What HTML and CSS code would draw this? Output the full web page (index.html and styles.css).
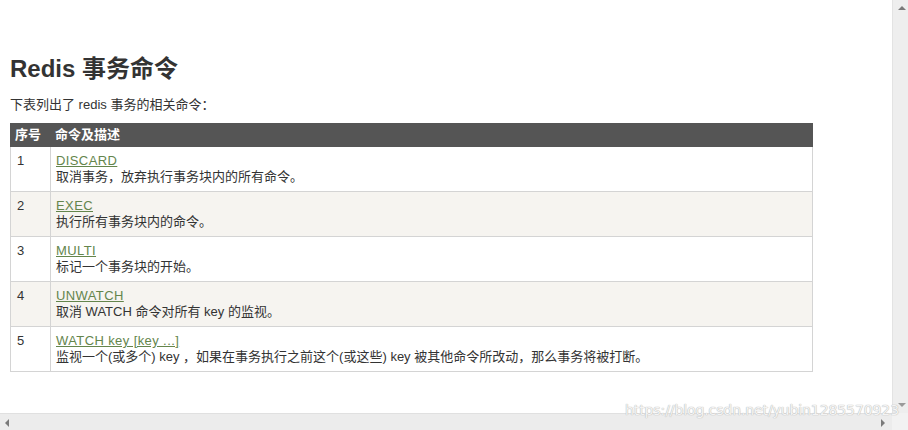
FILE: index.html
```html
<!DOCTYPE html>
<html lang="zh-CN">
<head>
<meta charset="utf-8">
<title>Redis 事务命令</title>
<link rel="stylesheet" href="styles.css">
</head>
<body>
<div class="frame">
  <div class="viewport">
    <div class="article">
      <h2 class="title">Redis 事务命令</h2>
      <p class="intro">下表列出了 redis 事务的相关命令：</p>
      <table class="reference">
        <thead>
          <tr><th class="col-no">序号</th><th>命令及描述</th></tr>
        </thead>
        <tbody>
          <tr><td>1</td><td><a href="#">DISCARD</a><br>取消事务，放弃执行事务块内的所有命令。</td></tr>
          <tr class="alt"><td>2</td><td><a href="#">EXEC</a><br>执行所有事务块内的命令。</td></tr>
          <tr><td>3</td><td><a href="#">MULTI</a><br>标记一个事务块的开始。</td></tr>
          <tr class="alt"><td>4</td><td><a href="#">UNWATCH</a><br>取消 WATCH 命令对所有 key 的监视。</td></tr>
          <tr><td>5</td><td><a href="#">WATCH key [key ...]</a><br>监视一个(或多个) key ，如果在事务执行之前这个(或这些) key 被其他命令所改动，那么事务将被打断。</td></tr>
        </tbody>
      </table>
    </div>
  </div>
  <div class="vscroll"><span class="arrow up"></span><span class="arrow down"></span></div>
  <div class="hscroll"><span class="arrow left"></span><span class="arrow right"></span></div>
  <div class="corner"></div>
  <div class="watermark">https://blog.csdn.net/yubin1285570923</div>
</div>
</body>
</html>
```
FILE: styles.css
```css
html, body {
  margin: 0;
  padding: 0;
  background: #fff;
}
.frame {
  position: relative;
  width: 908px;
  height: 430px;
  display: grid;
  grid-template-columns: 892px 16px;
  grid-template-rows: 413px 17px;
  overflow: hidden;
  font-family: "Liberation Sans", "Noto Sans CJK SC", sans-serif;
  color: #333;
}
.viewport {
  overflow: hidden;
  background: #fff;
}
.article {
  padding: 54px 0 0 10px;
}
.title {
  margin: 0;
  font-size: 24px;
  line-height: 30px;
  font-weight: bold;
  color: #333;
}
.intro {
  margin: 12px 0 0 0;
  font-size: 13px;
  line-height: 18px;
}
.reference {
  margin-top: 9px;
  width: 803px;
  border-collapse: collapse;
  font-size: 13px;
}
.reference th {
  background: #555;
  color: #fff;
  text-align: left;
  font-weight: bold;
  padding: 3px 3px 3px 4px;
  line-height: 16px;
  border: 1px solid #555;
}
.reference .col-no {
  width: 32px;
}
.reference td {
  border: 1px solid #d4d4d4;
  padding: 6px 6px 6px 5px;
  line-height: 16px;
  vertical-align: top;
}
.reference td:first-child {
  padding-left: 6px;
}
.reference tr.alt td {
  background: #f6f4f0;
}
.reference a {
  color: #64854c;
  text-decoration: underline;
  letter-spacing: 0.4px;
}
.vscroll {
  position: relative;
  background: #eeeeee;
  border-left: 1px solid #e3e3e3;
}
.hscroll {
  position: relative;
  background: #ececec;
  border-top: 1px solid #e0e0e0;
}
.corner {
  background: #f2f2f2;
}
.arrow {
  position: absolute;
  width: 0;
  height: 0;
}
.arrow.up {
  left: 5px;
  top: 6px;
  border-left: 4px solid transparent;
  border-right: 4px solid transparent;
  border-bottom: 4px solid #7a7a7a;
}
.arrow.down {
  left: 5px;
  bottom: 6px;
  border-left: 4px solid transparent;
  border-right: 4px solid transparent;
  border-top: 4px solid #9a9a9a;
}
.arrow.left {
  left: 5px;
  top: 5px;
  border-top: 4px solid transparent;
  border-bottom: 4px solid transparent;
  border-right: 4px solid #7a7a7a;
}
.arrow.right {
  right: 7px;
  top: 5px;
  border-top: 4px solid transparent;
  border-bottom: 4px solid transparent;
  border-left: 4px solid #7a7a7a;
}
.watermark {
  position: absolute;
  left: 625px;
  top: 402px;
  font-family: "DejaVu Sans", sans-serif;
  font-size: 14px;
  line-height: 16px;
  letter-spacing: -0.1px;
  color: #f4f4f4;
  text-shadow: 0 0 1px #b8b8b8, 0 0 1px #b8b8b8;
}
```
